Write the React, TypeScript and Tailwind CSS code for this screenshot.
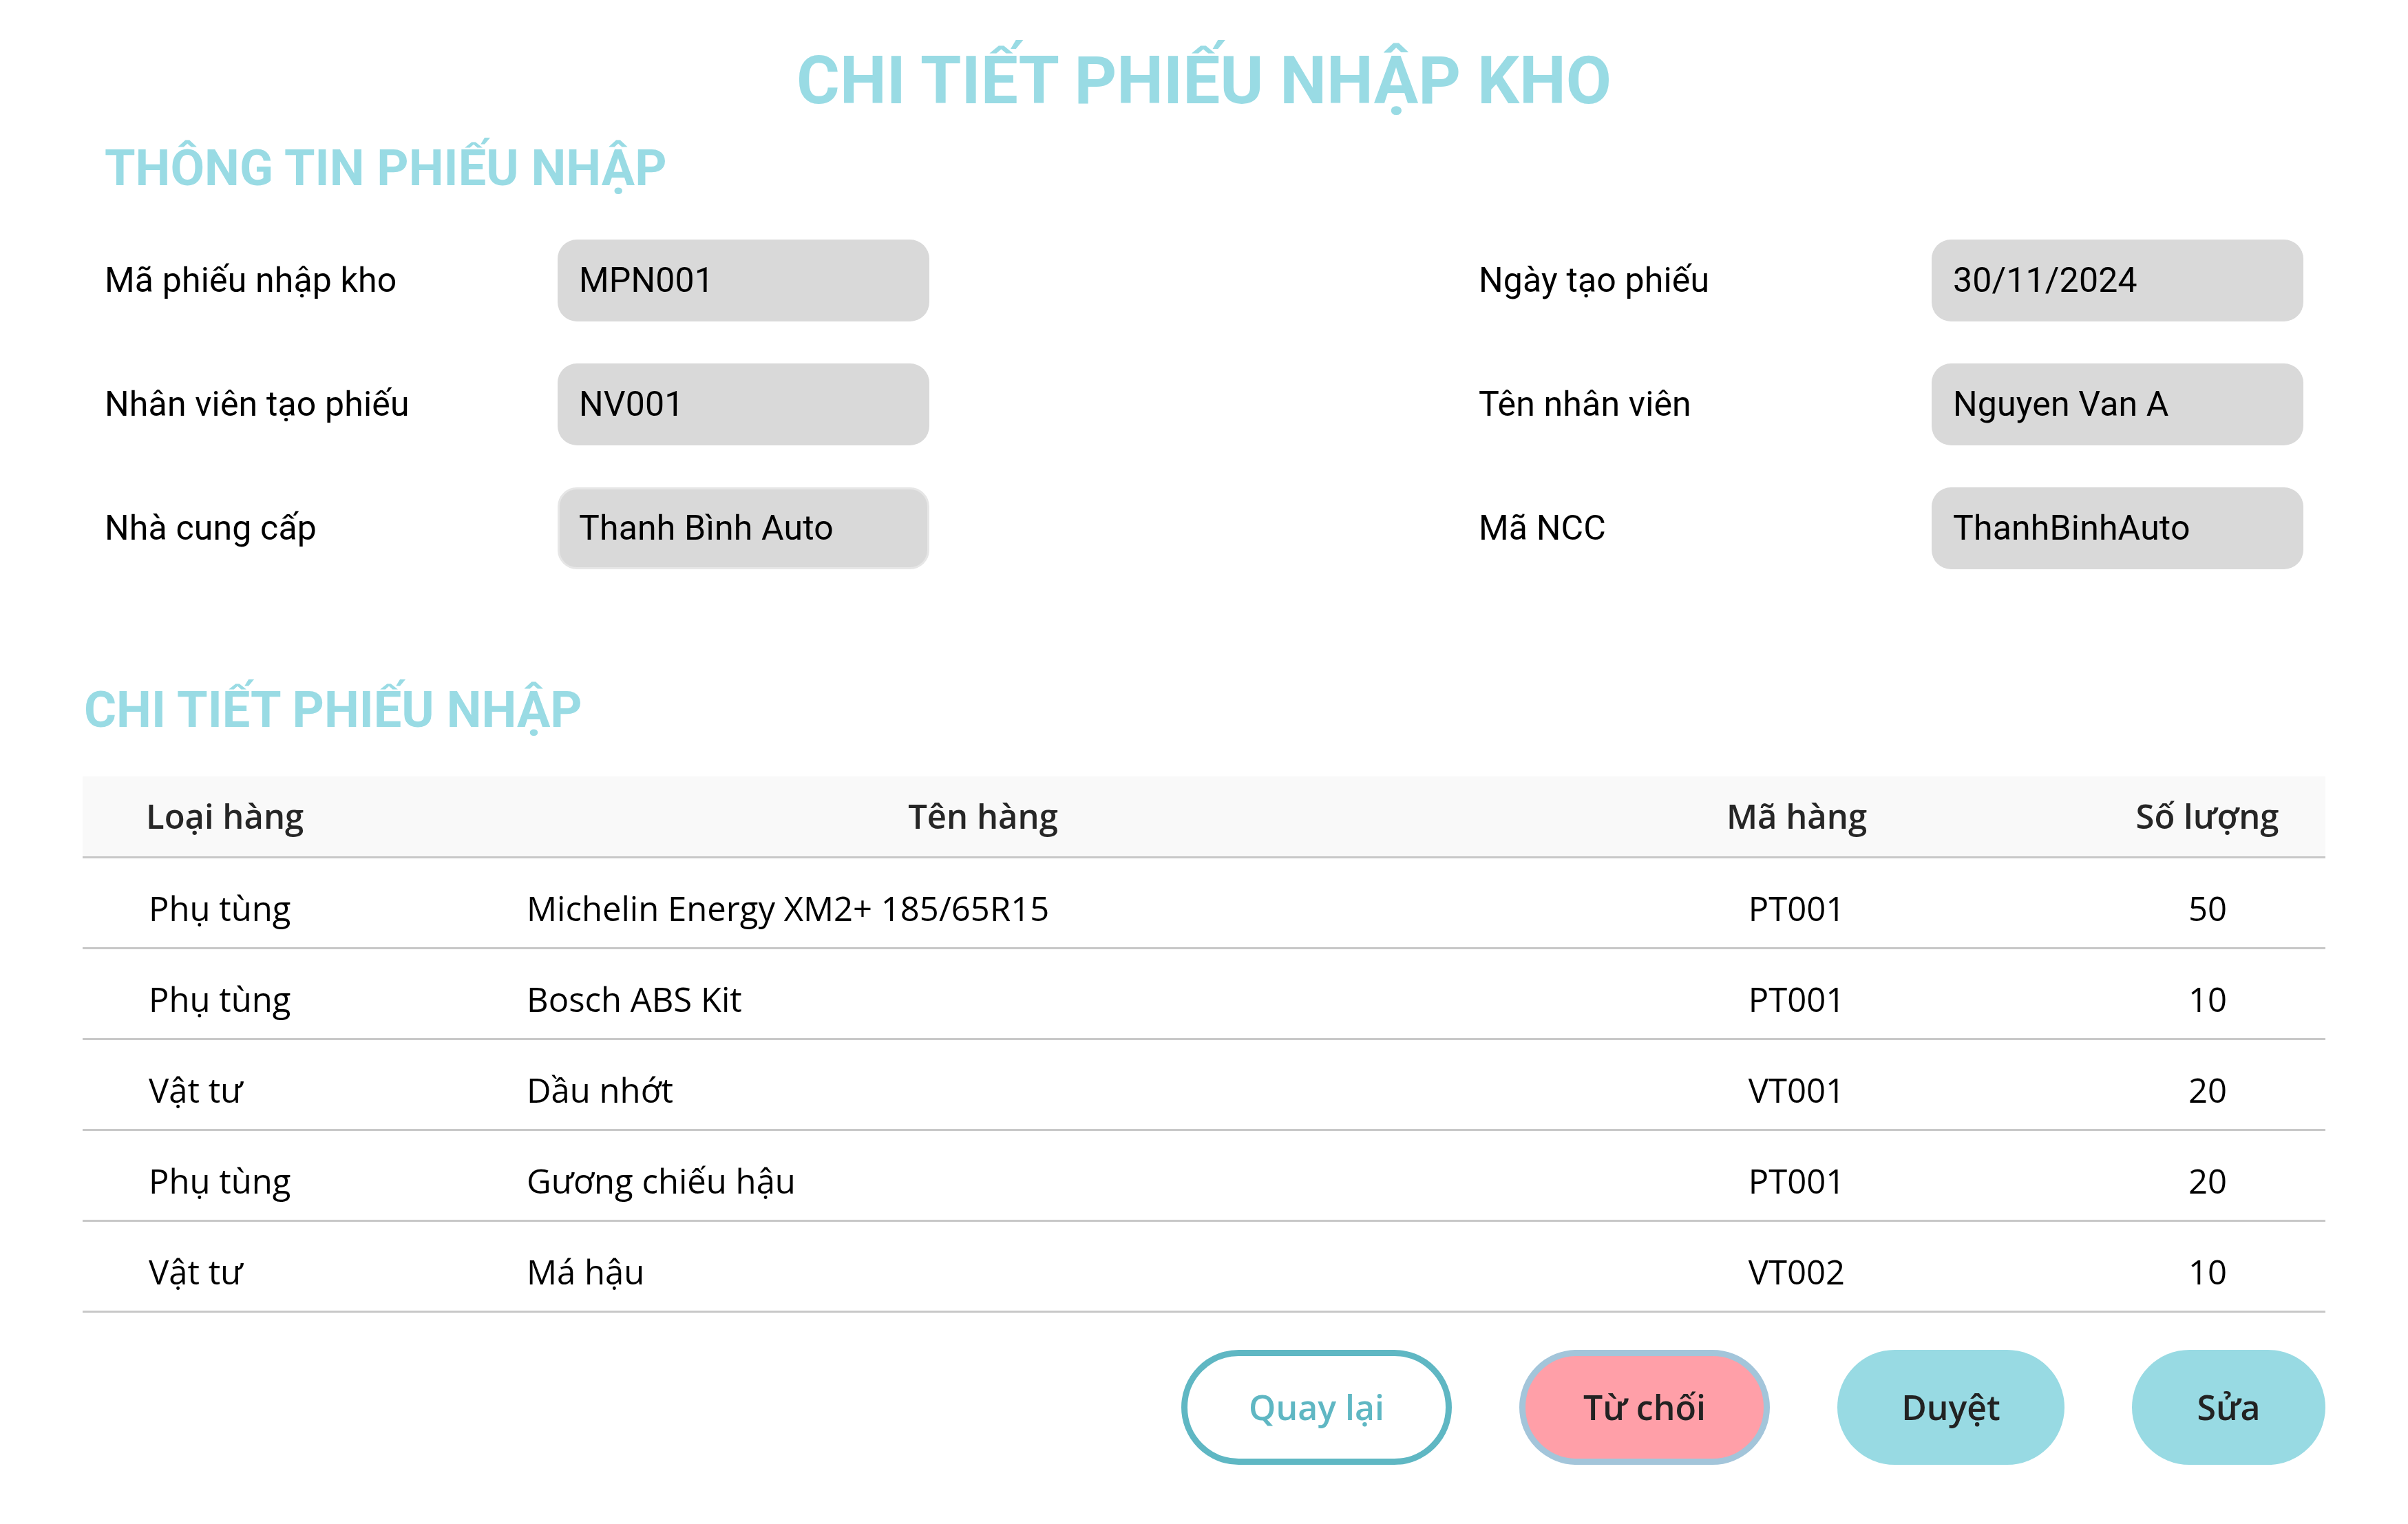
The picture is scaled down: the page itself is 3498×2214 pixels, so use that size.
const TEAL = "#99dbe4";

type Field = { label: string; value: string; outlined?: boolean };

const leftFields: Field[] = [
  { label: "Mã phiếu nhập kho", value: "MPN001" },
  { label: "Nhân viên tạo phiếu", value: "NV001" },
  { label: "Nhà cung cấp", value: "Thanh Bình Auto", outlined: true },
];

const rightFields: Field[] = [
  { label: "Ngày tạo phiếu", value: "30/11/2024" },
  { label: "Tên nhân viên", value: "Nguyen Van A" },
  { label: "Mã NCC", value: "ThanhBinhAuto" },
];

const rows = [
  { type: "Phụ tùng", name: "Michelin Energy XM2+ 185/65R15", code: "PT001", qty: 50 },
  { type: "Phụ tùng", name: "Bosch ABS Kit", code: "PT001", qty: 10 },
  { type: "Vật tư", name: "Dầu nhớt", code: "VT001", qty: 20 },
  { type: "Phụ tùng", name: "Gương chiếu hậu", code: "PT001", qty: 20 },
  { type: "Vật tư", name: "Má hậu", code: "VT002", qty: 10 },
];

function FieldRow({ f }: { f: Field }) {
  return (
    <div className="flex items-center tracking-[0.01em]">
      <span className="w-[658px] text-[50px] text-black">{f.label}</span>
      <div
        className={
          f.outlined
            ? "flex h-[119px] w-[540px] items-center rounded-[28px] border-[3px] border-[#e6e6e6] bg-[#d9d9d9] px-[28px] text-[50px] text-black"
            : "flex h-[119px] w-[540px] items-center rounded-[28px] bg-[#d9d9d9] px-[31px] text-[50px] text-black"
        }
      >
        {f.value}
      </div>
    </div>
  );
}

export default function App() {
  return (
    <main className="min-h-screen bg-white pt-[69px] font-['Roboto',sans-serif]">
      <h1 className="text-center text-[96px] font-bold leading-none" style={{ color: TEAL }}>
        CHI TIẾT PHIẾU NHẬP KHO
      </h1>

      <h2 className="mt-[44px] pl-[152px] text-[72px] font-bold leading-none text-[#99dbe4]">
        THÔNG TIN PHIẾU NHẬP
      </h2>

      <section className="mt-[67px] flex justify-between px-[152px]">
        <div className="flex flex-col gap-[61px]">
          {leftFields.map((f) => (
            <FieldRow key={f.label} f={f} />
          ))}
        </div>
        <div className="flex flex-col gap-[61px]">
          {rightFields.map((f) => (
            <FieldRow key={f.label} f={f} />
          ))}
        </div>
      </section>

      <h2 className="mt-[169px] pl-[122px] text-[72px] font-bold leading-none text-[#99dbe4]">
        CHI TIẾT PHIẾU NHẬP
      </h2>

      <div className="mx-[120px] mt-[60px] font-['Open_Sans',sans-serif]">
        <div className="grid h-[119px] grid-cols-[549px_1518px_846px_1fr] items-center border-b-[3px] border-[#c8c8c8] bg-[#f9f9f9] text-[49px] font-semibold text-[#262626]">
          <span className="pl-[92px]">Loại hàng</span>
          <span className="text-center">Tên hàng</span>
          <span className="text-center">Mã hàng</span>
          <span className="pl-[2px] text-center">Số lượng</span>
        </div>
        {rows.map((r, i) => (
          <div
            key={i}
            className="grid h-[132px] grid-cols-[549px_1518px_846px_1fr] items-center border-b-[3px] border-[#c8c8c8] pt-[17px] text-[49px] text-black"
          >
            <span className="pl-[96px]">{r.type}</span>
            <span className="pl-[96px]">{r.name}</span>
            <span className="text-center">{r.code}</span>
            <span className="pl-[3px] text-center">{r.qty}</span>
          </div>
        ))}

        <div className="mt-[54px] flex justify-end gap-[98px] text-[50px] font-semibold">
          <button className="flex h-[167px] w-[393px] items-center justify-center rounded-full border-[9px] border-[#5fb7c3] bg-white text-[#5fb7c3]">
            Quay lại
          </button>
          <button className="flex h-[167px] w-[364px] items-center justify-center rounded-full border-[9px] border-[#a3c5da] bg-[#ff9fa8] text-[#222]">
            Từ chối
          </button>
          <button className="flex h-[167px] w-[330px] items-center justify-center rounded-full bg-[#98dae3] text-[#222]">
            Duyệt
          </button>
          <button className="flex h-[167px] w-[281px] items-center justify-center rounded-full bg-[#98dae3] text-[#222]">
            Sửa
          </button>
        </div>
      </div>
    </main>
  );
}
